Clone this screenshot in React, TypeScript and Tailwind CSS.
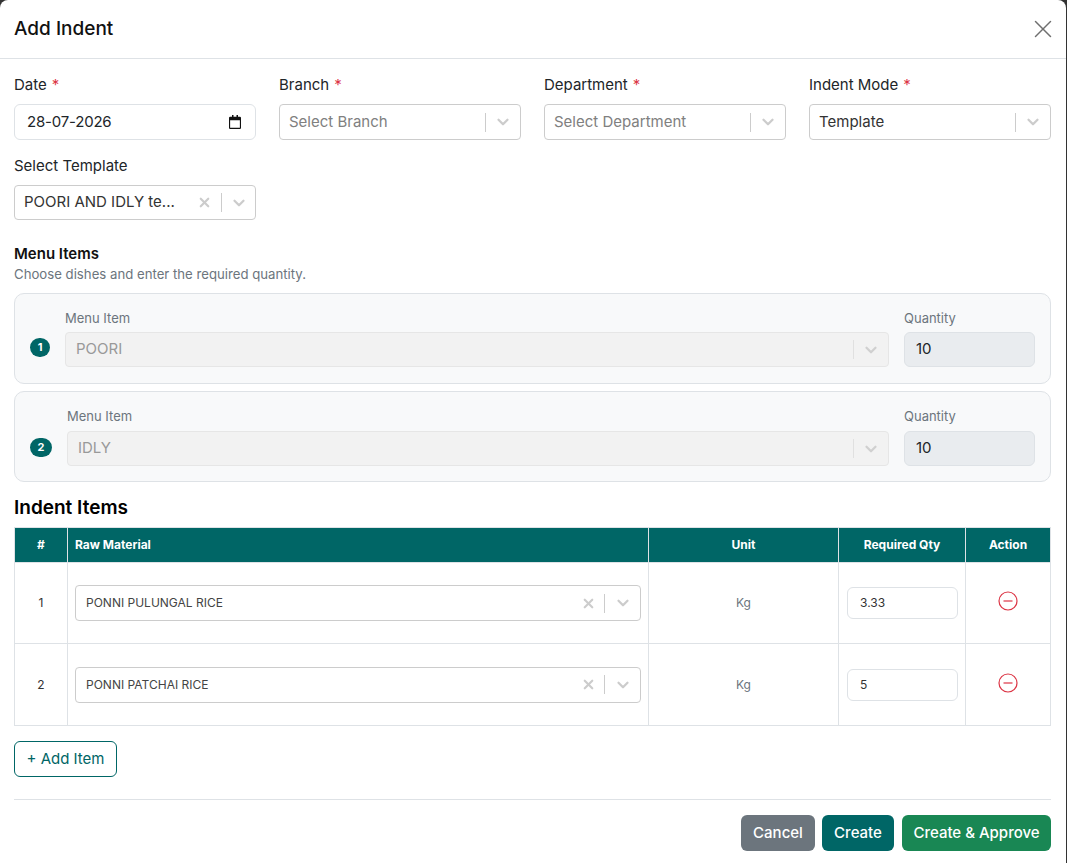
import { X, ChevronDown } from "lucide-react"

const inter = "font-['Inter',sans-serif]"

const SelectBox = ({
  value,
  placeholder,
  clearable,
  disabled,
  small,
  className = "",
}: {
  value?: string
  placeholder?: string
  clearable?: boolean
  disabled?: boolean
  small?: boolean
  className?: string
}) => (
  <div
    className={`flex items-center rounded-[4px] border ${
      disabled ? "border-[#e6e6e6] bg-[#f2f2f2]" : "border-[#cccccc] bg-white"
    } ${className}`}
  >
    <div
      className={`min-w-0 flex-1 truncate ${small ? "text-xs" : "text-[15px]"} ${
        small || disabled ? "pl-[10px]" : "pl-[9px]"
      } ${
        disabled ? "text-[#999999]" : placeholder ? "text-[#808080]" : small ? "text-[#444444]" : "text-[#333333]"
      }`}
    >
      {value ?? placeholder}
    </div>
    {clearable && <X className={`size-[15px] text-[#cccccc] ${small ? "mr-[8px]" : "mr-[9px]"}`} strokeWidth={3.5} />}
    <span className={`h-[19px] w-px ${disabled ? "bg-[#e0e0e0]" : "bg-[#cccccc]"}`} />
    <div className={`flex justify-center ${small ? "w-[35px]" : clearable ? "w-[33px]" : "w-[34px]"}`}>
      <ChevronDown className={`size-[18px] ${disabled ? "text-[#d0d0d0]" : "text-[#cccccc]"}`} strokeWidth={3} />
    </div>
  </div>
)

const Field = ({
  label,
  required,
  children,
}: {
  label: string
  required?: boolean
  children: React.ReactNode
}) => (
  <div className="flex flex-col">
    <label className="mb-[8px] h-[22px] text-[15px] leading-[22px] text-[#212529]">
      {label}
      {required && <span className="ml-[5px] text-[#dc3545]">*</span>}
    </label>
    {children}
  </div>
)

const MenuRow = ({ index, name, second }: { index: number; name: string; second: boolean }) => (
  <div
    className={`flex h-[91px] items-end rounded-[10px] border border-[#dee2e6] bg-[#f8f9fa] pl-[15px] pr-[15px] ${
      second ? "pb-[15px]" : "pb-[16px]"
    }`}
  >
    <span
      className={`flex h-[19px] items-center justify-center rounded-full bg-[#006666] text-[11px] font-bold text-white ${
        second ? "mb-[9px] w-[22px]" : "mb-[10px] w-[20px]"
      }`}
    >
      {index}
    </span>
    <div className="ml-[15px] min-w-0 flex-1">
      <div className={`text-[13px] leading-[19px] text-[#6c757d] ${second ? "mb-[5px]" : "mb-[4px]"}`}>Menu Item</div>
      <SelectBox value={name} disabled className="h-[35px]" />
    </div>
    <div className="ml-[15px] w-[131px]">
      <div className={`text-[13px] leading-[19px] text-[#6c757d] ${second ? "mb-[5px]" : "mb-[4px]"}`}>Quantity</div>
      <div className="flex h-[35px] items-center rounded-[6px] border border-[#dee2e6] bg-[#e9ecef] pl-[11px] text-[15px] text-[#212529]">
        10
      </div>
    </div>
  </div>
)

const rows = [
  { id: 1, name: "PONNI PULUNGAL RICE", qty: "3.33", height: "h-[81px]" },
  { id: 2, name: "PONNI PATCHAI RICE", qty: "5", height: "h-[82px]" },
]

const App = () => {
  return (
    <div className={`h-[863px] overflow-hidden bg-[#333333] ${inter}`}>
      <div className="h-full w-[1066px] rounded-t-[8px] bg-white">
        <header className="flex h-[59px] items-center justify-between border-b border-[#dee2e6] pl-[14px] pr-[8px]">
          <h1 className="text-[19px] font-medium text-[#111111]">Add Indent</h1>
          <X className="-mt-[1px] size-[30px] text-[#6f6f6f]" strokeWidth={1.2} />
        </header>

        <div className="pl-[14px] pr-[15px] pt-[15px]">
          <div className="grid grid-cols-4 gap-x-[23px]">
            <Field label="Date" required>
              <div className="flex h-[36px] items-center justify-between rounded-[6px] border border-[#dee2e6] bg-white pl-[12px] pr-[14px] text-[15px] tracking-[-0.2px] text-[#212529]">
                28-07-2026
                <svg viewBox="0 0 16 16" preserveAspectRatio="none" className="h-[14px] w-[12px] text-[#111111]" fill="currentColor">
                  <path d="M4 0h2v2h4V0h2v2h2.500A1.500 1.500 0 0 1 16 3.500V14.500A1.500 1.500 0 0 1 14.500 16h-13A1.500 1.500 0 0 1 0 14.500v-11A1.500 1.500 0 0 1 1.500 2H4V0zM1.500 6v8.500h13V6h-13z" />
                </svg>
              </div>
            </Field>
            <Field label="Branch" required>
              <SelectBox placeholder="Select Branch" className="h-[36px]" />
            </Field>
            <Field label="Department" required>
              <SelectBox placeholder="Select Department" className="h-[36px]" />
            </Field>
            <Field label="Indent Mode" required>
              <SelectBox value="Template" className="h-[36px]" />
            </Field>
          </div>

          <div className="mt-[15px] grid grid-cols-4 gap-x-[23px]">
            <div className="flex flex-col">
              <label className="mb-[8px] h-[22px] text-[15px] leading-[22px] text-[#212529]">Select Template</label>
              <SelectBox value="POORI AND IDLY te..." clearable className="h-[35px]" />
            </div>
          </div>

          <h2 className="mt-[23px] text-[15px] leading-[21px] font-semibold text-[#111111]">Menu Items</h2>
          <p className="mt-[1px] text-[13.2px] leading-[18px] text-[#6c757d]">Choose dishes and enter the required quantity.</p>

          <div className="mt-[10px] flex flex-col gap-[7px]">
            <MenuRow index={1} name="POORI" second={false} />
            <MenuRow index={2} name="IDLY" second />
          </div>

          <h2 className="mt-[12px] text-[19px] leading-[27px] font-semibold text-black">Indent Items</h2>

          <table className="mt-[6px] w-[1036px] table-fixed border-collapse text-xs">
            <colgroup>
              <col className="w-[53px]" />
              <col className="w-[581px]" />
              <col className="w-[190px]" />
              <col className="w-[127px]" />
              <col className="w-[85px]" />
            </colgroup>
            <thead>
              <tr className="h-[35px] bg-[#006666] font-bold text-white">
                <th className="border border-[#dee2e6] text-center">#</th>
                <th className="border border-[#dee2e6] pl-[7px] text-left">Raw Material</th>
                <th className="border border-[#dee2e6] text-center">Unit</th>
                <th className="border border-[#dee2e6] text-center">Required Qty</th>
                <th className="border border-[#dee2e6] text-center">Action</th>
              </tr>
            </thead>
            <tbody>
              {rows.map((row) => (
                <tr key={row.id} className={row.height}>
                  <td className="border border-[#dee2e6] text-center text-[#333333]">{row.id}</td>
                  <td className="border border-[#dee2e6] px-[7px]">
                    <SelectBox value={row.name} clearable small className="h-[36px]" />
                  </td>
                  <td className="border border-[#dee2e6] text-center text-[#6c757d]">Kg</td>
                  <td className="border border-[#dee2e6] pl-[8px] pr-[7px]">
                    <div className="flex h-[32px] items-center rounded-[6px] border border-[#dee2e6] pl-[12px] text-[#333333]">
                      {row.qty}
                    </div>
                  </td>
                  <td className="border border-[#dee2e6]">
                    <svg viewBox="0 0 20 20" className="mx-auto -mt-[4px] size-[20px] text-[#dc3545]" fill="none" stroke="currentColor" strokeWidth="1.200">
                      <circle cx="10" cy="10" r="9" />
                      <path d="M5.500 10h9" />
                    </svg>
                  </td>
                </tr>
              ))}
            </tbody>
          </table>

          <button className="mt-[15px] flex h-[36px] w-[103px] items-center justify-center rounded-[6px] border border-[#006666] text-[15px] text-[#006666]">
            + Add Item
          </button>

          <footer className="mt-[22px] flex justify-end border-t border-[#dee2e6] pt-[15px]">
            <button className="h-[36px] w-[74px] rounded-[6px] bg-[#6c757d] text-[15px] font-medium text-white">Cancel</button>
            <button className="ml-[7px] h-[36px] w-[72px] rounded-[6px] bg-[#006666] text-[15px] font-medium text-white">Create</button>
            <button className="ml-[8px] h-[36px] w-[149px] rounded-[6px] bg-[#198754] text-[15px] font-medium text-white">Create &amp; Approve</button>
          </footer>
        </div>
      </div>
    </div>
  )
}

export default App
